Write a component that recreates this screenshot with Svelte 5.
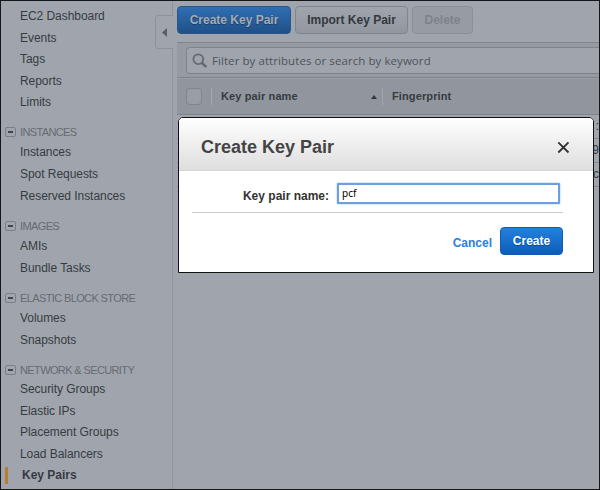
<script>
  const sections = [
    { items: ['EC2 Dashboard', 'Events', 'Tags', 'Reports', 'Limits'] },
    { title: 'INSTANCES', items: ['Instances', 'Spot Requests', 'Reserved Instances'] },
    { title: 'IMAGES', items: ['AMIs', 'Bundle Tasks'] },
    { title: 'ELASTIC BLOCK STORE', items: ['Volumes', 'Snapshots'] },
    { title: 'NETWORK & SECURITY', items: ['Security Groups', 'Elastic IPs', 'Placement Groups', 'Load Balancers', 'Key Pairs'] }
  ];
  const active = 'Key Pairs';
  const rows = [':', '9', 'c'];
  let name = $state('pcf');
</script>

<div class="console">
  <nav>
    {#each sections as s}
      <section class:plain={!s.title} class:tight={s.items.length > 4}>
        {#if s.title}
          <h4><span class="toggle"></span>{s.title}</h4>
        {/if}
        {#each s.items as label}
          <a class:active={label === active}>{label}</a>
        {/each}
      </section>
    {/each}
  </nav>
  <main>
    <div class="toolbar">
      <button class="btn primary create">Create Key Pair</button>
      <button class="btn import">Import Key Pair</button>
      <button class="btn delete" disabled>Delete</button>
    </div>
    <div class="filter">
      <div class="search">
        <svg width="16" height="16" viewBox="0 0 16 16" fill="none" stroke="#656a71">
          <circle cx="6.3" cy="6.2" r="4.9" stroke-width="1.8" />
          <path d="M10 10l3.6 3.4" stroke-width="2.6" stroke-linecap="round" />
        </svg>
        <span>Filter by attributes or search by keyword</span>
      </div>
    </div>
    <div class="thead">
      <span class="check"></span>
      <span class="col first">Key pair name<i></i></span>
      <span class="col">Fingerprint</span>
    </div>
    {#each rows as r}
      <div class="row">{r}</div>
    {/each}
  </main>
  <div class="collapse"><svg width="5" height="9" viewBox="0 0 5 9"><path d="M5 0v9L0 4.5z" fill="#5b6067" /></svg></div>

  <div class="dialog">
    <header>
      <h2>Create Key Pair</h2>
      <svg width="13" height="13" viewBox="0 0 13 13" stroke="#333" stroke-width="1.9"><path d="M1.3 1.3l10.2 10.2M11.5 1.3L1.3 11.5" /></svg>
    </header>
    <div class="field">
      <label for="kp">Key pair name:</label>
      <input id="kp" bind:value={name} />
    </div>
    <footer>
      <a>Cancel</a>
      <button class="btn go">Create</button>
    </footer>
  </div>
</div>

<style>
  .console {
    position: relative;
    box-sizing: border-box;
    width: 600px;
    height: 490px;
    border: 1px solid #15161a;
    background: #a0a5ad;
    display: flex;
    overflow: hidden;
    font: 12px/22px "Liberation Sans", Arial, sans-serif;
    color: #363b42;
  }
  nav {
    box-sizing: border-box;
    width: 172px;
    flex: none;
    border-right: 1px solid #8f949c;
    padding-top: 5px;
  }
  section { margin-bottom: 10px; }
  section.plain { margin-bottom: 9px; }
  section a {
    display: block;
    height: 22px;
    padding-left: 19px;
    letter-spacing: -0.05px;
    white-space: nowrap;
  }
  section.tight a { height: 21.6px; line-height: 21.6px; }
  section.tight a.active {
    font-weight: bold;
    letter-spacing: 0;
    margin-left: 4px;
    height: 17px;
    line-height: 17px;
    margin-top: 2px;
    border-left: 3px solid #b47f33;
    padding-left: 14px;
  }
  h4 {
    margin: 0;
    height: 18px;
    padding-left: 4px;
    display: flex;
    align-items: center;
    font: 11px/18px "Liberation Sans", Arial, sans-serif;
    letter-spacing: -0.62px;
    color: #666b72;
    white-space: nowrap;
  }
  .toggle {
    box-sizing: border-box;
    width: 11px;
    height: 10px;
    border: 1px solid #7b8088;
    border-radius: 2px;
    margin-right: 4px;
    background: linear-gradient(#41464d, #41464d) center / 5px 2px no-repeat;
  }
  main { flex: 1; min-width: 0; padding-left: 4px; }
  .toolbar { display: flex; gap: 4px; padding-top: 5px; height: 36px; }
  .btn {
    box-sizing: border-box;
    height: 28px;
    padding: 0;
    border: 1px solid #80858e;
    border-radius: 4px;
    font: bold 12px/24px "Liberation Sans", Arial, sans-serif;
    color: #33383e;
    background: linear-gradient(#a0a5ad, #92979f);
  }
  .create { width: 114px; }
  .import { width: 113px; }
  .toolbar .delete { width: 61px; margin-left: 0; color: #7e838b; border-color: #8b9098; background: #979ca4; }
  .primary {
    border-color: #28578c;
    color: #a6abb3;
    background: linear-gradient(#2f6eb4, #205087);
    text-shadow: 0 1px 1px #1a3d68;
  }
  .filter {
    box-sizing: border-box;
    height: 36px;
    border-top: 1px solid #82878f;
    border-bottom: 1px solid #7f848c;
    background: #969ba3;
    padding: 4px 0 0 9px;
  }
  .search {
    box-sizing: border-box;
    height: 27px;
    border: 1px solid #7f848c;
    border-right: 0;
    border-radius: 4px 0 0 4px;
    background: #a0a5ad;
    display: flex;
    align-items: center;
    gap: 4px;
    padding-left: 5px;
    font: 11.5px/20px "Open Sans", sans-serif;
    letter-spacing: 0.07px;
    color: #4e535a;
    white-space: nowrap;
  }
  .thead {
    box-sizing: border-box;
    height: 37px;
    background: #91969e;
    border-bottom: 1px solid #7f848c;
    border-top: 1px solid #9a9fa7;
    display: flex;
    align-items: center;
    padding-left: 9px;
    font-weight: bold;
  }
  .check {
    box-sizing: border-box;
    width: 16px;
    height: 17px;
    border: 1px solid #80858d;
    border-radius: 4px;
    background: #999ea6;
    margin-right: 9px;
  }
  .col {
    box-sizing: border-box;
    height: 17px;
    line-height: 17px;
    border-left: 1px solid #a3a8b0;
    padding-left: 9px;
    font-size: 11px;
  }
  .first { width: 171px; display: flex; align-items: center; justify-content: space-between; padding-right: 5px; }
  .col { letter-spacing: 0.12px; }
  .first i { border: 3px solid transparent; border-bottom: 4px solid #33383e; border-top: 0; }
  .row {
    box-sizing: border-box;
    height: 24px;
    border-bottom: 1px solid #878c94;
    text-align: right;
    line-height: 23px;
  }
  .collapse {
    position: absolute;
    box-sizing: border-box;
    left: 154px;
    top: 14px;
    width: 18px;
    height: 34px;
    border: 1px solid #8d929a;
    border-right: 0;
    border-radius: 4px 0 0 4px;
    background: #a0a5ad;
    display: flex;
    align-items: center;
    padding-left: 6px;
  }
  .dialog {
    position: absolute;
    box-sizing: border-box;
    left: 177px;
    top: 116px;
    width: 416px;
    height: 156px;
    border: 1px solid #111;
    border-radius: 5px 5px 0 0;
    background: #fff;
    overflow: hidden;
  }
  header {
    box-sizing: border-box;
    height: 53px;
    border-bottom: 1px solid #d4d4d4;
    background: linear-gradient(#fff, #dedede);
    display: flex;
    align-items: center;
    justify-content: space-between;
    padding: 6px 23px 0 22px;
  }
  h2 { margin: 0; font: bold 18px/24px "Liberation Sans", Arial, sans-serif; color: #444; }
  .field {
    box-sizing: border-box;
    height: 42px;
    margin: 0 30px 0 13px;
    border-bottom: 1px solid #ccc;
    display: flex;
    align-items: flex-start;
    padding-top: 12px;
  }
  label { width: 137px; text-align: right; font-weight: bold; line-height: 26px; color: #333; }
  input {
    box-sizing: border-box;
    width: 223px;
    height: 21px;
    margin-left: 8px;
    border: 2px solid #6ca0dc;
    border-radius: 1px;
    box-shadow: 0 0 2px #8fb8e6;
    outline: 0;
    padding: 0 0 1px 3px;
    font: 10px "Noto Sans", sans-serif;
    color: #000;
  }
  footer { display: flex; justify-content: flex-end; padding: 14px 30px 0 0; gap: 8px; }
  footer a { font-weight: bold; color: #2a80dd; line-height: 33px; }
  .go {
    width: 63px;
    border-color: #0f5cb0;
    color: #fff;
    background: linear-gradient(#2580dd, #0c5dbb);
    text-shadow: 0 1px 1px #0a4a94;
  }
</style>
